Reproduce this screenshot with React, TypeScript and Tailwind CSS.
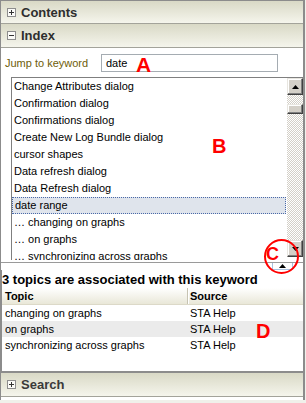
import React from "react";

const items = [
  "Change Attributes dialog",
  "Confirmation dialog",
  "Confirmations dialog",
  "Create New Log Bundle dialog",
  "cursor shapes",
  "Data refresh dialog",
  "Data Refresh dialog",
  "date range",
  "\u2026 changing on graphs",
  "\u2026 on graphs",
  "\u2026 synchronizing across graphs",
];

function Box({ plus }: { plus: boolean }) {
  return (
    <span className="w-[9px] h-[9px] border border-[#8d8d8d] bg-[#fbfbf8] flex items-center justify-center shrink-0">
      <svg width="7" height="7" viewBox="0 0 7 7">
        <rect x="1" y="3" width="5" height="1" fill="#333" />
        {plus && <rect x="3" y="1" width="1" height="5" fill="#333" />}
      </svg>
    </span>
  );
}

function Header({ label, plus, h, light }: { label: string; plus: boolean; h: string; light?: boolean }) {
  return (
    <div
      className={`flex items-center ${h} pl-[6px] gap-[5px] bg-linear-to-b from-[#d9d9c6] to-[#f5f5ec] border-b border-[#a3a39a]`}
    >
      <Box plus={plus} />
      <span className={`text-[13px] leading-none ${light ? "font-bold text-[#3a3a3a]" : "font-bold text-[#2e2e2e]"}`}>
        {label}
      </span>
    </div>
  );
}

function Arrow({ up }: { up: boolean }) {
  return (
    <svg width="7" height="4" viewBox="0 0 7 4">
      <polygon points={up ? "0,4 3.5,0 7,4" : "0,0 3.5,4 7,0"} fill="#000" />
    </svg>
  );
}

function ScrollBtn({ up, cls }: { up: boolean; cls?: string }) {
  return (
    <div
      className={`h-[17px] shrink-0 bg-[#d4d0c8] border border-t-[#e8e6e0] border-l-[#e8e6e0] border-r-[#404040] border-b-[#404040] shadow-[inset_-1px_-1px_#808080,inset_1px_1px_#ffffff] flex items-center justify-center ${cls ?? ""}`}
    >
      <Arrow up={up} />
    </div>
  );
}

export default function App() {
  return (
    <div
      className="relative w-[306px] h-[403px] bg-[#f0f0ea] overflow-hidden"
      style={{ fontFamily: '"Liberation Sans", Arial, sans-serif' }}
    >
      <div className="flex flex-col w-[305px] h-[400px] border-t border-l border-r-2 border-[#8c8c8c] bg-white">
        <Header label="Contents" plus={true} h="h-[23px]" />
        <Header label="Index" plus={false} h="h-[24px]" />

        {/* Index panel */}
        <div className="h-[212px] flex flex-col bg-white pt-[6px]">
          <div className="flex items-center h-[18px]">
            <span className="w-[100px] pl-[4px] text-[11px] text-[#6e5d08] leading-none">Jump to keyword</span>
            <div className="w-[177px] h-[18px] border border-[#a5acb2] flex items-center pl-[4px] text-[11px] text-black leading-none">
              date
            </div>
          </div>
          <div className="mt-[5px] ml-[10px] h-[183px] border-t border-l border-[#7f7f7f] flex overflow-hidden">
            <div className="flex-1 flex flex-col pt-0">
              {items.map((t, i) => (
                <div
                  key={i}
                  className={`h-[17px] shrink-0 flex items-center pl-[2px] text-[11px] text-black leading-none whitespace-nowrap ${
                    i === 7 ? "bg-[#dfe4ec] border border-dotted border-[#4a69a8] pl-[1px] mr-[1px]" : ""
                  }`}
                >
                  {t}
                </div>
              ))}
            </div>
            <div className="w-[16px] flex flex-col pb-[3px]">
              <ScrollBtn up={true} />
              <div className="flex-1 flex flex-col bg-[repeating-conic-gradient(#d4d0c8_0_25%,#ffffff_0_50%)] bg-[length:2px_2px]">
                <div className="mt-[9px] h-[10px] bg-[#d4d0c8] border border-t-[#e8e6e0] border-l-[#e8e6e0] border-r-[#404040] border-b-[#404040] shadow-[inset_-1px_-1px_#808080,inset_1px_1px_#ffffff]" />
              </div>
              <ScrollBtn up={false} />
            </div>
          </div>
        </div>

        {/* Splitter */}
        <div className="h-[10px] flex flex-col bg-white">
          <div className="mt-[2px] h-[1px] bg-[#9a9a9a]" />
          <div className="flex justify-end pr-[10px]">
            <div className="w-[21px] h-[7px] border-l border-r border-b border-[#a9c1e0] flex items-center justify-center">
              <Arrow up={true} />
            </div>
          </div>
        </div>

        {/* Lower panel */}
        <div className="h-[101px] flex flex-col bg-white border-l border-[#8c8c8c]">
          <div className="h-[18px] flex items-center text-[13px] font-bold text-black leading-none">
            3 topics are associated with this keyword
          </div>
          <div className="h-[17px] flex bg-linear-to-b from-[#ffffff] to-[#e9e7d8] border-b border-[#dcd9c8]">
            <div className="w-[186px] flex items-center pl-[3px] text-[11px] font-bold text-black leading-none border-r border-[#c6c3b2]">
              Topic
            </div>
            <div className="w-[1px] bg-[#ffffff]" />
            <div className="flex-1 flex items-center pl-[1px] text-[11px] font-bold text-black leading-none">Source</div>
          </div>
          {[
            ["changing on graphs", false],
            ["on graphs", true],
            ["synchronizing across graphs", false],
          ].map(([t, g], i) => (
            <div key={i} className={`h-[16px] flex items-center text-[11px] text-black leading-none ${g ? "bg-[#ebebeb]" : ""}`}>
              <span className="w-[188px] pl-[3px]">{t as string}</span>
              <span>STA Help</span>
            </div>
          ))}
        </div>

        <div className="h-[2px] bg-[#8c8c8c]" />
        <Header label="Search" plus={true} h="h-[24px]" light />
      </div>

      {/* Annotations */}
      <span className="absolute left-[136px] top-[54px] text-[21px] leading-none font-bold text-[#ff0000]">A</span>
      <span className="absolute left-[212px] top-[136px] text-[20px] leading-none font-bold text-[#ff0000]">B</span>
      <span className="absolute left-[266px] top-[245px] text-[18px] leading-none font-bold text-[#ff0000]">C</span>
      <span className="absolute left-[256px] top-[321px] text-[20px] leading-none font-bold text-[#ff0000]">D</span>
      <svg className="absolute left-[263px] top-[238px]" width="37" height="37" viewBox="0 0 37 37">
        <circle cx="18.5" cy="18.5" r="16.5" fill="none" stroke="#ff0000" strokeWidth="2" />
      </svg>
    </div>
  );
}
